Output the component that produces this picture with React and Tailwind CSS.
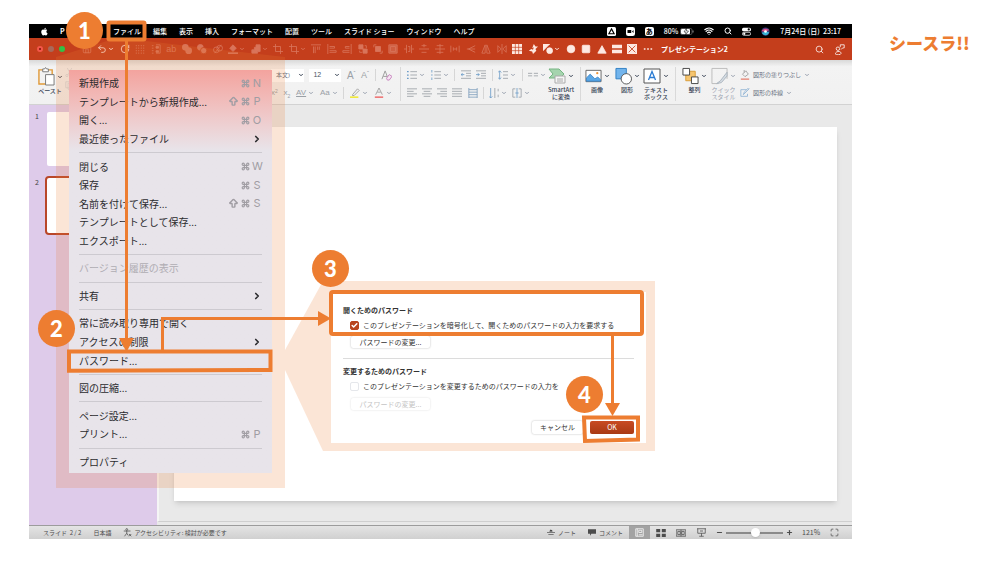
import { useState } from 'react';
import { ChevronDown, ChevronRight, Search, Wifi, Check, House, Undo2, RotateCw, Minus, Plus, Maximize, ArrowBigUp, Command } from 'lucide-react';

const menuBar = ['編集', '表示', '挿入', 'フォーマット', '配置', 'ツール', 'スライド ショー', 'ウィンドウ', 'ヘルプ'];

const fileMenu = [
  [
    { label: '新規作成', keys: 'N' },
    { label: 'テンプレートから新規作成...', keys: 'P', shift: true },
    { label: '開く...', keys: 'O' },
    { label: '最近使ったファイル', sub: true },
  ],
  [
    { label: '閉じる', keys: 'W' },
    { label: '保存', keys: 'S' },
    { label: '名前を付けて保存...', keys: 'S', shift: true },
    { label: 'テンプレートとして保存...' },
    { label: 'エクスポート...' },
  ],
  [{ label: 'バージョン履歴の表示', disabled: true }],
  [{ label: '共有', sub: true }],
  [{ label: '常に読み取り専用で開く' }, { label: 'アクセスの制限', sub: true }, { label: 'パスワード...' }],
  [{ label: '図の圧縮...' }],
  [{ label: 'ページ設定...' }, { label: 'プリント...', keys: 'P' }],
  [{ label: 'プロパティ' }],
];

// Small stroke/fill glyphs on a 12x12 grid
const glyphs = {
  dots: <path d="M1 2h1M4 2h1M7 2h1M10 2h1M1 5h1M4 5h1M7 5h1M10 5h1M1 8h1M4 8h1M7 8h1M10 8h1M1 11h1M4 11h1M7 11h1M10 11h1" strokeWidth="1.4" />,
  listBox: <><path d="M6 1h5v10H6M1 2h2M1 5h2M1 8h2M1 11h2" /><path d="M6 3h3v2H6zM6 8h3v2H6z" fill="currentColor" /></>,
  merge: <path fill="currentColor" stroke="none" d="M4 0a4 4 0 0 1 4 4 4 4 0 1 1-4 4 4 4 0 1 1 0-8z" />,
  subtract: <><circle cx="4" cy="4" r="3.5" fill="currentColor" /><circle cx="8" cy="8" r="3.8" fill="currentColor" stroke="#c43e1c" /></>,
  intersect: <><circle cx="4" cy="7" r="3.4" /><circle cx="8" cy="5" r="3.4" /><path d="M2 11l8-10" /></>,
  fill: <><path d="M0 11h12" strokeWidth="2" /><path d="M2 5l4-4 4 4-4 4z" fill="currentColor" /></>,
  shape: <path fill="currentColor" d="M1 11V7h3V4h2V1h5v8H8v2z" />,
  crop: <path d="M3 0v9h9M0 3h9v9" />,
  alignTop: <path d="M0 1h12M3 3v8M5 3v8M8 3v4M10 3v4" />,
  alignLeft: <path d="M1 0v12M3 3h6v2H3M3 8h8v2H3" />,
  alignRight: <path d="M11 0v12M9 3H4v2h5M9 8H1v2h8" />,
  front: <><path d="M1 1h5v5H1zM6 6h5v5H6z" fill="currentColor" /><path d="M8 2h2v3M2 8v2h3" /></>,
  back: <><path d="M3 3h6v6H3z" fill="currentColor" /><path d="M1 4V1h3M8 11h3V8" /></>,
  block: <path d="M1 1h10v10H1zM3 3h6v6H3z" fill="currentColor" fillOpacity=".6" />,
  distH: <path d="M3 1v10M9 1v10M0 6h3M5 3h2v6H5M9 6h3" />,
  distV: <path d="M3 2h6M0 6h12M3 10h6M6 0v4" />,
  distV2: <path d="M2 2h8M0 6h12M2 10h8M6 0v12" />,
  distW: <path d="M1 2v8M4 4v4M8 4v4M11 2v8M4 6h4" />,
  share3: <path d="M11 2L3 6l8 4M1 6h10" />,
  mirror: <path d="M5 1v10H1zM7 1l4 10H7z" />,
  flip: <path d="M6 0v12M1 2l4 4-4 4zM11 2L7 6l4 4z" />,
  table: <><rect x="0" y="0" width="12" height="12" fill="currentColor" stroke="none" /><path d="M0 4h12M0 8h12M4 0v12M8 0v12" stroke="#c43e1c" strokeWidth=".8" /></>,
  paint: <path fill="currentColor" stroke="none" d="M7 0l2 3h3L9 6l1 2-4 4-1-3-4-1 3-2 2 1 1-3-2 1z" />,
  shapes: <><path d="M0 0h8L0 8z" fill="currentColor" /><circle cx="8" cy="8" r="3.5" fill="currentColor" /></>,
  circle: <circle cx="6" cy="6" r="4.6" fill="currentColor" />,
  square: <rect x="1.5" y="1.5" width="9" height="9" rx="1" fill="currentColor" />,
  triangle: <path d="M6 2l5 9H1z" fill="currentColor" />,
  equal: <path d="M0 1h12v4H0zM0 7h12v4H0z" fill="currentColor" stroke="none" />,
  cross: <><path d="M0 0h12v12H0z" fill="currentColor" stroke="none" /><path d="M2 2l8 8M10 2l-8 8" stroke="#c43e1c" /></>,
  more: <path d="M1 6h2M5 6h2M9 6h2" strokeWidth="1.8" />,
  scissors: <path d="M3 0l5 9M9 0L4 9M4 10a1.500 1.500 0 1 1-3 0 1.500 1.500 0 0 1 3 0zM11 10a1.500 1.500 0 1 1-3 0 1.500 1.500 0 0 1 3 0z" />,
  copy: <path d="M1 1h7v8H1zM4 3h7v8H4z" />,
  bullets: <><path d="M0 2h2M0 6h2M0 10h2" stroke="#6c9cc8" strokeWidth="1.500" /><path d="M4 2h8M4 6h8M4 10h8" /></>,
  numbers: <><path d="M1 0v3M0 6h2M1 9v3" stroke="#6c9cc8" /><path d="M4 2h8M4 6h8M4 10h8" /></>,
  indent: <><path d="M0 1h12M6 4h6M6 7h6M0 10h12" /><path d="M4 5.500H0M2 4L0 5.500 2 7" stroke="#6c9cc8" /></>,
  outdent: <><path d="M0 1h12M6 4h6M6 7h6M0 10h12" /><path d="M0 5.500h4M2 4l2 1.500L2 7" stroke="#6c9cc8" /></>,
  spacing: <><path d="M2 1v10M0 3l2-2 2 2M0 9l2 2 2-2" stroke="#6c9cc8" /><path d="M6 2h6M6 6h6M6 10h6" /></>,
  columns: <path d="M0 4h5M7 4h5M0 7h5M7 7h5" />,
  left: <path d="M0 1h12M0 4h8M0 7h12M0 10h8" />,
  center: <path d="M0 1h12M2 4h8M0 7h12M2 10h8" />,
  right: <path d="M0 1h12M4 4h8M0 7h12M4 10h8" />,
  justify: <path d="M0 1h12M0 4h12M0 7h12M0 10h12" />,
  spread: <path d="M1 0v12M11 0v12M1 2h10M1 5h10M1 8h10M1 11h10" stroke="#7f9fbd" />,
  direction: <><path d="M2 0v12M0 10l2 2 2-2" stroke="#6c9cc8" /><path d="M7 0v12M11 1v3M11 8v3" /></>,
  boxAlign: <><path d="M4 1H1v10h3M8 1h3v10H8" /><path d="M6 0v12M4 6h4" stroke="#6c9cc8" /></>,
};

function Glyph({ name, className = 'size-[10px]' }) {
  return (
    <svg viewBox="0 0 12 12" className={`${className} shrink-0`} fill="none" stroke="currentColor" strokeWidth="1">
      {glyphs[name]}
    </svg>
  );
}

const quickTools = [
  { name: 'home' }, { name: 'undo', drop: true, on: true }, { name: 'redo', on: true },
  { name: 'dots' }, { name: 'listBox' }, { name: 'ab' }, { name: 'merge' }, { name: 'subtract' }, { name: 'intersect' },
  { name: 'fill', drop: true }, { name: 'shape', drop: true }, { name: 'crop' }, { name: 'crop', drop: true },
  { name: 'alignTop' }, { name: 'alignLeft' }, { name: 'alignRight' }, { name: 'front' }, { name: 'back' }, { name: 'block' },
  { name: 'distH' }, { name: 'distV' }, { name: 'distV2' }, { name: 'distW' }, { name: 'share3' }, { name: 'mirror' }, { name: 'flip' },
  { name: 'table', on: true }, { name: 'paint', on: true }, { name: 'shapes', drop: true, on: true },
  { name: 'circle', on: true }, { name: 'square', on: true }, { name: 'triangle', on: true }, { name: 'equal', on: true },
  { name: 'cross', on: true }, { name: 'more', on: true },
];

function QuickIcon({ name }) {
  if (name === 'home') return <House className="size-[10px]" />;
  if (name === 'undo') return <Undo2 className="size-[10px]" />;
  if (name === 'redo') return <RotateCw className="size-[10px]" />;
  if (name === 'ab') return <span className="w-[10px] font-['Liberation_Sans',sans-serif] text-[9px] leading-[10px]">ab</span>;
  return <Glyph name={name} />;
}

function MacMenuBar() {
  return (
    <nav className="flex h-[14px] items-center bg-black pr-[11px] pl-[11px] text-[7px] font-medium text-white">
      <svg viewBox="0 0 24 24" className="size-[9px]" fill="currentColor">
        <path d="M17 12.500c0-2.500 2-3.700 2.200-3.800-1.200-1.800-3-2-3.700-2-1.600-.2-3 .9-3.800.9s-2-.9-3.300-.9C6.700 6.700 5 7.700 4.200 9.200c-1.900 3.200-.5 8 1.300 10.600.9 1.300 2 2.700 3.300 2.700 1.400-.1 1.900-.9 3.500-.9s2 .9 3.500.8c1.400 0 2.300-1.300 3.200-2.600 1-1.500 1.400-2.900 1.400-3-.1 0-3.400-1.300-3.400-4.300zM14.500 5c.7-.9 1.200-2.100 1.100-3.300-1 0-2.300.7-3 1.600-.7.800-1.300 2-1.100 3.200 1.100.1 2.300-.6 3-1.500z" />
      </svg>
      <button aria-label="PowerPoint" className="ml-[11px] w-[53px] text-left font-bold">P</button>
      <button className="w-7 whitespace-nowrap">ファイル</button>
      {menuBar.map((item) => (
        <button key={item} className="ml-3 whitespace-nowrap">{item}</button>
      ))}
      <div className="ml-auto flex items-center gap-[10px]">
        <svg viewBox="0 0 12 12" className="size-[9px]">
          <rect width="12" height="12" rx="2" fill="#fff" />
          <path d="M6 2.500l3.500 6.500h-7z" fill="none" stroke="#000" strokeWidth="1.500" />
        </svg>
        <svg viewBox="0 0 12 12" className="size-[9px]">
          <rect width="12" height="12" rx="3" fill="#fff" />
          <path d="M2 4h5v4H2zM8 6l2-2v4z" fill="#000" />
        </svg>
        <span className="size-[9px] rounded-xs bg-white text-center text-[7px] leading-[9px] font-bold text-black">あ</span>
        <span className="flex items-center gap-[2px] whitespace-nowrap">
          80%
          <svg viewBox="0 0 28 14" className="h-[7px] w-[14px]">
            <rect x="1" y="1" width="23" height="12" rx="3" fill="none" stroke="#999" />
            <rect x="2" y="2" width="18" height="10" rx="2" fill="#fff" />
            <path d="M13 0L8 8h4l-1 6 6-8h-4z" stroke="#000" fill="#fff" />
            <path d="M26 5v4" stroke="#999" strokeWidth="2" />
          </svg>
        </span>
        <Wifi className="size-[10px]" strokeWidth={3} />
        <Search className="size-[8px]" strokeWidth={3} />
        <svg viewBox="0 0 12 12" className="size-[9px]">
          <rect y="1" width="12" height="4.500" rx="2" fill="#fff" />
          <circle cx="9" cy="3.200" r="1.500" fill="#000" />
          <rect x=".5" y="7" width="11" height="4" rx="2" fill="none" stroke="#fff" />
          <circle cx="3" cy="9" r="1.500" fill="#fff" />
        </svg>
        <svg viewBox="0 0 12 12" className="size-[9px]">
          <circle cx="6" cy="6" r="5.500" fill="#3b3a78" />
          <path d="M1 5c3-4 7-3 10-1-3 1-6 4-10 1z" fill="#e0508a" />
          <path d="M1 8c3 4 8 4 10-1-3-1-6-1-10 1z" fill="#35b5d6" />
          <circle cx="6" cy="6" r="1.800" fill="#fff" />
        </svg>
        <span className="whitespace-nowrap">7月24日 (日)&nbsp; 23:17</span>
      </div>
    </nav>
  );
}

function TitleBar() {
  return (
    <header className="flex h-[22px] items-center bg-[#c43e1c] pr-[7px] pl-2 text-white">
      <div className="flex gap-[5px]">
        <button aria-label="閉じる" className="size-[6px] rounded-full border-2 border-[#f4574b] bg-[#7d1009]" />
        <button aria-label="しまう" className="size-[6px] rounded-full bg-[#a8695a]" />
        <button aria-label="拡大" className="size-[6px] rounded-full bg-[#32c146]" />
      </div>
      <div className="ml-[17px] flex w-[571px] items-center justify-between">
        {quickTools.map((tool, i) => (
          <button key={i} aria-label={tool.name} className={`flex items-center gap-px ${tool.on ? 'text-[#fde9e2]' : 'text-[#d9745a]'}`}>
            <QuickIcon name={tool.name} />
            {tool.drop && <ChevronDown className="size-[6px]" strokeWidth={4} />}
          </button>
        ))}
      </div>
      <h1 className="ml-2 text-[7px] font-bold whitespace-nowrap">プレゼンテーション2</h1>
      <div className="ml-auto flex items-center gap-[10px]">
        <button aria-label="検索"><Search className="size-[9px]" /></button>
        <button aria-label="共有">
          <svg viewBox="0 0 14 14" className="size-[11px]" fill="none" stroke="currentColor">
            <circle cx="5" cy="6" r="2.200" />
            <path d="M2 13c-1-4 7-5 7-1 0 2-6 2-7 1zM8 4V1h5v4h-2l-2 2" />
          </svg>
        </button>
      </div>
    </header>
  );
}

function Drop({ dark }) {
  return <ChevronDown className={`size-[6px] shrink-0 ${dark ? 'text-gray-700' : 'text-gray-400'}`} strokeWidth={4} />;
}

function Rule() {
  return <span className="h-3 w-px bg-[#d6d6d6]" />;
}

function Tool({ name, drop }) {
  return (
    <button aria-label={name} className="flex items-center gap-[2px] text-[#9aa0a6]">
      <Glyph name={name} />
      {drop && <Drop />}
    </button>
  );
}

// Large ribbon button: icon, chevron, label under both
function BigTool({ label, muted, children, className }) {
  return (
    <button className={`flex flex-col items-center gap-px ${className || ''}`}>
      <span className="flex items-center gap-[2px]">
        {children}
        <Drop dark={!muted} />
      </span>
      <span className={`text-[6px] leading-[7px] whitespace-pre-line ${muted ? 'text-gray-400' : 'font-medium text-gray-700'}`}>
        {label}
      </span>
    </button>
  );
}

function Ribbon() {
  return (
    <section className="flex h-[45px] items-start border-b border-[#d2d2d2] bg-linear-to-b from-[#d9d9d9] via-[#f3f3f3] via-15% to-[#f1f1f1] pt-[7px] pl-2">
      <BigTool label="ペースト" className="w-[26px]">
        <svg viewBox="0 0 18 20" className="h-[19px] w-[17px]" fill="none">
          <path d="M8 18H1V3h14v5" stroke="#e09a3a" strokeWidth="1.500" />
          <path d="M5 5V2h2l1-1.500L9 2h2v3z" fill="#fff" stroke="#777" />
          <path d="M8 8h9v11H8z" fill="#fff" stroke="#777" />
        </svg>
      </BigTool>

      <div className="ml-[2px] flex w-[200px] flex-col gap-1 pt-px text-gray-300">
        <Glyph name="scissors" className="size-[9px]" />
        <Glyph name="copy" className="size-[9px]" />
      </div>

      <div className="flex w-[127px] flex-col gap-1 pl-[6px] font-['Liberation_Sans','Noto_Sans_CJK_JP',sans-serif] text-[#9aa0a6]">
        <div className="flex h-4 items-center justify-between">
          <div className="flex w-[33px] items-center bg-white text-[6px] text-gray-500">
            <select aria-label="フォント" className="h-[13px] w-[27px] appearance-none pl-[5px] whitespace-nowrap"><option>本文)</option></select>
            <Drop dark />
          </div>
          <div className="flex w-[32px] items-center bg-white text-[7px] text-gray-600">
            <select aria-label="フォント サイズ" className="h-[13px] w-[25px] appearance-none pl-1"><option>12</option></select>
            <Drop dark />
          </div>
          <button className="flex text-[10px] leading-[13px]">A<span className="text-[6px] leading-[9px]">ˆ</span></button>
          <button className="flex text-[9px] leading-[13px]">A<span className="text-[6px] leading-[9px]">ˇ</span></button>
          <Rule />
          <button aria-label="書式のクリア">
            <svg viewBox="0 0 12 12" className="size-[11px]" fill="none">
              <path d="M1 10l3.500-9L8 10M2.500 7h4" stroke="#999" />
              <path d="M6 9l3-4 3 2-3 4H7z" fill="#f4e6f2" stroke="#c77fbd" />
            </svg>
          </button>
        </div>
        <div className="flex h-3 items-center justify-between text-[8px]">
          <button className="flex leading-3">x<span className="text-[5px] leading-[9px]">2</span></button>
          <button className="flex leading-3">x<span className="self-end text-[5px] leading-[6px]">2</span></button>
          <button className="flex items-center gap-[2px] leading-3"><span className="underline">AV</span><Drop /></button>
          <button className="flex items-center gap-[2px] leading-3">Aa<Drop /></button>
          <Rule />
          <button aria-label="蛍光ペン" className="flex items-center gap-[2px]">
            <svg viewBox="0 0 12 12" className="size-[10px]"><path d="M3 8l6-7 2 2-6 6H3z" fill="none" stroke="#999" /><path d="M0 11h10" stroke="#f0e83e" strokeWidth="2" /></svg>
            <Drop />
          </button>
          <button aria-label="文字色" className="flex items-center gap-[2px]">
            <svg viewBox="0 0 12 12" className="size-[10px]"><path d="M2 8l4-8 4 8M4 5h4" fill="none" stroke="#999" /><path d="M1 11h10" stroke="#ee7a7a" strokeWidth="2" /></svg>
            <Drop />
          </button>
        </div>
      </div>

      <span className="ml-2 h-[34px] w-px bg-[#d9d9d9]" />

      <div className="ml-[6px] flex flex-col gap-[6px] pt-[2px]">
        <div className="flex w-[139px] items-center justify-between">
          <Tool name="bullets" drop /><Tool name="numbers" drop /><Rule />
          <Tool name="indent" /><Tool name="outdent" /><Rule />
          <Tool name="spacing" drop /><Rule /><Tool name="columns" drop />
        </div>
        <div className="flex w-[123px] items-center justify-between">
          <Tool name="left" /><Tool name="center" /><Tool name="right" /><Tool name="justify" /><Tool name="spread" /><Rule />
          <Tool name="direction" drop /><Tool name="boxAlign" drop />
        </div>
      </div>

      <BigTool label={'SmartArt\nに変換'} className="w-[30px]">
        <svg viewBox="0 0 18 16" className="h-[18px] w-[18px]">
          <path d="M1 1h10l5 5-4 4H1l4-4z" fill="#a5d4ae" stroke="#76b583" />
          <path d="M7 8h10v7H7zM9 11h6M9 13h6" fill="#f5f5f5" stroke="#aaa" />
        </svg>
      </BigTool>

      <span className="ml-1 h-[34px] w-px bg-[#d9d9d9]" />

      <div className="flex items-start">
        <BigTool label="画像" className="w-[32px]">
          <svg viewBox="0 0 18 16" className="h-[18px] w-[17px]">
            <path d="M1 2h16v12H1z" fill="#fff" stroke="#666" />
            <path d="M1.500 10l4-4 5 5 3-2 3 3v1.500h-15z" fill="#5aa7e6" stroke="#2775bd" strokeWidth=".7" />
            <circle cx="13" cy="5" r="1.200" fill="#e8933a" />
          </svg>
        </BigTool>
        <BigTool label="図形" className="w-[28px]">
          <svg viewBox="0 0 18 18" className="h-[18px] w-[17px]">
            <path d="M1 1h11v11H1z" fill="#72b4ec" stroke="#2f7fc4" />
            <circle cx="12" cy="12" r="5.500" fill="#fff" stroke="#555" />
          </svg>
        </BigTool>
        <BigTool label={'テキスト\nボックス'} className="w-[30px]">
          <svg viewBox="0 0 18 16" className="h-[18px] w-[18px]">
            <path d="M1 1h16v14H1z" fill="#fff" stroke="#555" />
            <path d="M5.500 12L9 3.500l3.500 8.500M6.700 9.500h4.600" fill="none" stroke="#2b7cd3" strokeWidth="1.300" />
          </svg>
        </BigTool>
      </div>

      <span className="ml-1 h-[34px] w-px bg-[#d9d9d9]" />

      <div className="ml-1 flex items-start">
        <BigTool label="整列" className="w-[29px]">
          <svg viewBox="0 0 18 18" className="h-[18px] w-[17px]">
            <path d="M4 4h10v10H4z" fill="#f6c56f" stroke="#d99b35" />
            <path d="M1 1h7v7H1zM10 10h7v7h-7z" fill="#fff" stroke="#444" />
          </svg>
        </BigTool>
        <BigTool label={'クイック\nスタイル'} muted className="w-[29px]">
          <svg viewBox="0 0 18 18" className="h-[18px] w-[17px]" fill="none">
            <path d="M1 1h16v11M1 1v16h7" stroke="#bbb" />
            <path d="M17 5l-7 9-4 3 5-1 6-7z" fill="#d5dde4" stroke="#aab4bd" />
          </svg>
        </BigTool>
      </div>

      <div className="ml-[2px] flex flex-col gap-2 pt-[3px] text-[6px] text-gray-500">
        <button className="flex items-center gap-[3px] leading-[10px] whitespace-nowrap">
          <svg viewBox="0 0 12 12" className="size-[10px]"><path d="M3 5l4-4 3 4-4 3zM5 3V0" fill="none" stroke="#999" /><path d="M1 11h10" stroke="#e79a8d" strokeWidth="2" /></svg>
          図形の塗りつぶし<Drop />
        </button>
        <button className="flex items-center gap-[3px] leading-[10px] whitespace-nowrap">
          <svg viewBox="0 0 12 12" className="size-[10px]"><path d="M8 2H1v8h8V7M4 8l1-3 5-5 1 1-5 5z" fill="none" stroke="#8fb3d4" /></svg>
          図形の枠線<Drop />
        </button>
      </div>
    </section>
  );
}

function StatusBar() {
  const [zoom, setZoom] = useState(52);

  return (
    <footer className="flex h-[14px] items-center border-t border-[#9c9c9c] bg-linear-to-b from-[#e4e4e4] to-[#d0d0d0] pl-[14px] text-[6px] text-[#4c4c4c]">
      <span className="whitespace-pre">スライド  2 / 2</span>
      <button className="ml-3">日本語</button>
      <button className="ml-3 flex items-center gap-[2px]">
        <svg viewBox="0 0 12 12" className="size-[9px]" fill="none" stroke="currentColor">
          <circle cx="5" cy="2" r="1.200" /><path d="M1 4h9M5 4v3l-3 4M5 7l2 3M8 8l3 3M11 8l-3 3" />
        </svg>
        アクセシビリティ: 検討が必要です
      </button>
      <div className="ml-auto flex items-center">
        <button className="flex items-center gap-[3px]">
          <svg viewBox="0 0 12 10" className="h-[7px] w-[8px]" stroke="currentColor"><path d="M0 5h12M2 8h8M4 3l2-2 2 2z" /></svg>
          ノート
        </button>
        <button className="ml-3 flex items-center gap-[3px]">
          <svg viewBox="0 0 12 10" className="h-[7px] w-[8px]" fill="currentColor"><path d="M0 0h12v7H5L3 10V7H0z" /></svg>
          コメント
        </button>
        <button aria-label="標準" className="ml-[6px] flex h-[13px] w-[21px] items-center justify-center bg-[#a3a3a3] text-white">
          <svg viewBox="0 0 12 12" className="size-[9px]" fill="none" stroke="currentColor"><path d="M1 1h10v10H1zM3 1v10M5 3h4v3H5zM5 9h5" /></svg>
        </button>
        <button aria-label="一覧" className="ml-[6px]">
          <svg viewBox="0 0 12 10" className="h-[8px] w-[10px]" fill="currentColor"><path d="M0 0h5v4H0zM7 0h5v4H7zM0 6h5v4H0zM7 6h5v4H7z" /></svg>
        </button>
        <button aria-label="閲覧表示" className="ml-[10px]">
          <svg viewBox="0 0 12 10" className="h-[8px] w-[10px]" fill="none" stroke="currentColor"><path d="M0 1h12v8H0zM6 1v8M2 3h3v4H2zM7 3h3v4H7z" /></svg>
        </button>
        <button aria-label="スライド ショー" className="ml-[11px]">
          <svg viewBox="0 0 12 12" className="size-[9px]" fill="none" stroke="currentColor"><path d="M0 1h12M1 1v6h10V1M6 7v4M3 11h6M4 4h4" /></svg>
        </button>
        <button aria-label="縮小" className="ml-[10px]"><Minus className="size-[7px]" strokeWidth={4} /></button>
        <div className="relative ml-[3px] flex h-2 w-[57px] items-center">
          <span className="h-[2px] w-full bg-[#8a8a8a]" />
          <input
            type="range"
            aria-label="ズーム"
            value={zoom}
            onChange={(e) => setZoom(Number(e.target.value))}
            className="absolute inset-0 w-full appearance-none bg-transparent [&::-webkit-slider-thumb]:size-[9px] [&::-webkit-slider-thumb]:appearance-none [&::-webkit-slider-thumb]:rounded-full [&::-webkit-slider-thumb]:bg-white [&::-webkit-slider-thumb]:shadow"
          />
        </div>
        <button aria-label="拡大" className="ml-[3px]"><Plus className="size-[7px]" strokeWidth={4} /></button>
        <button className="ml-[9px] w-[17px] text-[7px]">121%</button>
        <button aria-label="ウィンドウに合わせる" className="mr-[13px] ml-[11px]"><Maximize className="size-[9px]" /></button>
      </div>
    </footer>
  );
}

function FileMenu() {
  return (
    <div className="absolute top-[46px] left-10 flex h-[403px] w-[203px] flex-col bg-[#e8e5ea] bg-linear-to-b from-[#f3a39e] via-[#e8e4ea] via-20% to-[#e8e4ea] pt-1 pb-[2px] text-[10px] text-[#2b2b2e]">
      {fileMenu.map((group, i) => (
        <div key={i} className="contents">
          {i > 0 && <hr className="mx-[10px] my-1 h-px shrink-0 border-0 bg-[#cdcad0]" />}
          {group.map((item) => (
            <button
              key={item.label}
              disabled={item.disabled}
              className="flex flex-1 items-center justify-between px-[10px] leading-none whitespace-nowrap disabled:text-[#b0adb3]"
            >
              {item.label}
              {item.keys && (
                <span className="flex items-center gap-[2px] font-[Inter] text-[11px] text-[#a09da3]">
                  {item.shift && <ArrowBigUp className="size-[11px]" strokeWidth={3} />}
                  <Command className="size-[9px]" strokeWidth={3} />
                  <span className="w-[10px] text-center">{item.keys}</span>
                </span>
              )}
              {item.sub && <ChevronRight className="size-[10px]" strokeWidth={4} />}
            </button>
          ))}
        </div>
      ))}
    </div>
  );
}

function CheckRow({ id, checked, onChange, children }) {
  return (
    <div className="ml-[7px] flex h-4 items-center gap-1">
      <span className="relative size-[9px]">
        <input
          id={id}
          type="checkbox"
          checked={checked}
          onChange={(e) => onChange(e.target.checked)}
          className="block size-[9px] appearance-none rounded-xs border border-gray-200 bg-white checked:border-[#b8441d] checked:bg-[#b8441d]"
        />
        {checked && <Check className="pointer-events-none absolute inset-px size-[7px] text-white" strokeWidth={5} />}
      </span>
      <label htmlFor={id} className="whitespace-nowrap">{children}</label>
    </div>
  );
}

function PasswordDialog() {
  const [openPassword, setOpenPassword] = useState(true);
  const [editPassword, setEditPassword] = useState(false);

  return (
    <form onSubmit={(e) => e.preventDefault()} className="absolute top-[268px] left-[302px] w-[315px] bg-white px-3 pt-3 pb-[9px] text-[7px] text-[#333]">
      <h2 className="leading-3 font-bold">開くためのパスワード</h2>
      <div className="mt-px">
        <CheckRow id="open-password" checked={openPassword} onChange={setOpenPassword}>
          このプレゼンテーションを暗号化して、開くためのパスワードの入力を要求する
        </CheckRow>
      </div>
      <button type="button" className="mt-[3px] ml-2 block h-3 w-[79px] rounded-xs leading-3 shadow-[0_0_2px_rgba(0,0,0,0.3)]">
        パスワードの変更...
      </button>
      <hr className="mt-[10px] border-[#dcdcdc]" />
      <h2 className="mt-[6px] leading-3 font-bold">変更するためのパスワード</h2>
      <div className="mt-px">
        <CheckRow id="edit-password" checked={editPassword} onChange={setEditPassword}>
          このプレゼンテーションを変更するためのパスワードの入力を
        </CheckRow>
      </div>
      <button type="button" disabled={!editPassword} className="mt-1 ml-2 block h-3 w-[79px] rounded-xs leading-3 shadow-[0_0_2px_rgba(0,0,0,0.15)] disabled:text-[#c4c4c4]">
        パスワードの変更...
      </button>
      <div className="mt-[11px] flex justify-end gap-[7px]">
        <button type="button" className="h-[13px] w-[51px] rounded-xs leading-[13px] shadow-[0_0_2px_rgba(0,0,0,0.3)]">キャンセル</button>
        <button type="submit" className="h-[13px] w-[44px] rounded-xs bg-linear-to-b from-[#c84b23] to-[#a93a14] leading-[13px] text-white">OK</button>
      </div>
    </form>
  );
}

function Badge({ children, className }) {
  return (
    <span className={`absolute flex size-[37px] items-center justify-center rounded-full bg-[#ed7d31] font-[Lato] text-[22px] leading-none font-black text-white ${className}`}>
      {children}
    </span>
  );
}

export default function App() {
  return (
    <main className="flex items-start bg-white pt-6 pb-6 pl-[29px] font-['Noto_Sans_CJK_JP',sans-serif]">
      <div className="relative min-w-0 flex-1">
        <MacMenuBar />
        <TitleBar />
        <Ribbon />

        <div className="flex h-[420px] bg-[#e9e9e9]">
          <aside className="w-[128px] bg-[#decbea] pt-[7px] text-[7px] text-[#444]">
            <div className="flex items-start gap-2 pl-[6px]">
              <span className="w-1 leading-2">1</span>
              <div className="h-[54px] w-[98px] rounded-xs bg-white" />
            </div>
            <div className="mt-[10px] flex items-start gap-[6px] pl-[6px]">
              <span className="w-1 pt-[2px] leading-2">2</span>
              <div className="h-[59px] w-[102px] rounded-sm border-2 border-[#b9472a] bg-white" />
            </div>
          </aside>
          <section className="mb-[3px] flex flex-1 border-b border-l-2 border-b-[#cfcfcf] border-l-[#f5f5f5] pt-[22px] pr-[15px] pb-[20px] pl-[15px]">
            <div className="flex-1 bg-white shadow-md" />
          </section>
        </div>

        <StatusBar />

        {/* tinted callouts behind the menu and the dialog */}
        <svg viewBox="0 0 823 514" className="pointer-events-none absolute top-0 left-0 h-[514px] w-[823px]" fill="#ed7d31" fillOpacity=".2">
          <path d="M78 17h39l139 16v431H27V33z" />
          <path d="M256 326l38-69h332v170H294l-38-81z" />
        </svg>

        <FileMenu />
        <PasswordDialog />

        <svg viewBox="0 0 823 514" className="pointer-events-none absolute top-0 left-0 h-[514px] w-[823px] overflow-visible" fill="none" stroke="#ed7d31" strokeWidth="3">
          <rect x="79.500" y="-1.500" width="36" height="17" rx="1" strokeWidth="4" />
          <path d="M97.500 17v300" />
          <path d="M90 314h15l-7.500 14z" fill="#ed7d31" stroke="none" />
          <path d="M40 327.500h201.500v18.500l-201.500 .8z" strokeWidth="4" />
          <path d="M133.500 326v-31.500H292" />
          <path d="M289 287v15l13-7.500z" fill="#ed7d31" stroke="none" />
          <rect x="302" y="268" width="311" height="42" rx="2" strokeWidth="4" />
          <path d="M583.500 312v70" />
          <path d="M576 379h15l-7.500 13z" fill="#ed7d31" stroke="none" />
          <path d="M555 393.500h54v22l-53 1.500z" strokeWidth="4" />
        </svg>

        <Badge className="-top-3 left-[37px]">1</Badge>
        <Badge className="top-[286px] left-[9px]">2</Badge>
        <Badge className="top-[226px] left-[283px]">3</Badge>
        <Badge className="top-[352px] left-[537px]">4</Badge>
      </div>

      <a href="#" className="w-[149px] shrink-0 pt-[7px] pl-[37px] text-[17px] leading-6 font-black whitespace-nowrap text-[#ed7d31]">シースラ!!</a>
    </main>
  );
}
